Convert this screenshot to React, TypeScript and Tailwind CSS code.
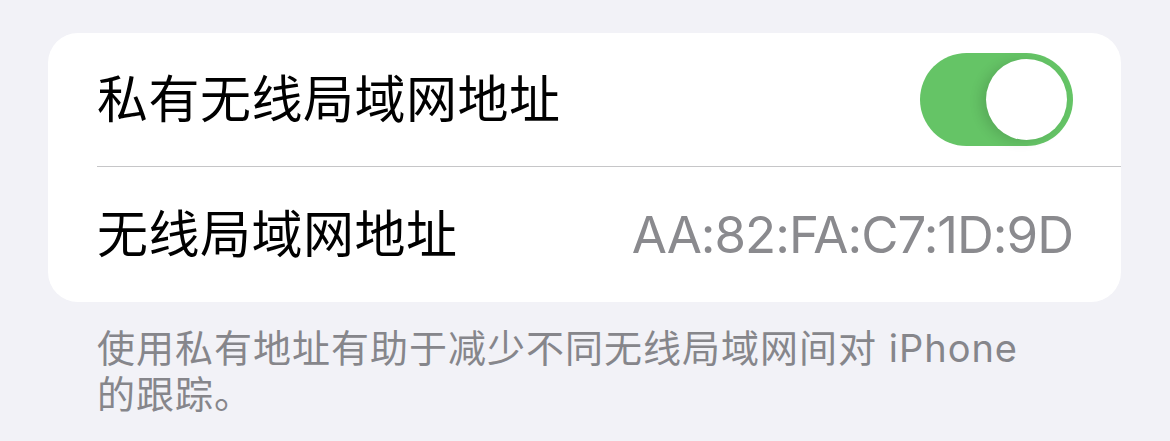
import type React from "react"

const font = { fontFamily: '"Inter", "Noto Sans CJK SC", sans-serif' }

interface RowProps {
  label: string
  last?: boolean
  children: React.ReactNode
}

const Row = ({ label, last, children }: RowProps) => (
  <div className="pl-[49px]">
    <div
      className={`flex items-center justify-between pr-[48px] ${
        last ? "h-[135px]" : "h-[134px] border-b border-[#c6c6c8]"
      }`}
    >
      <span className="text-[51px] leading-none text-black tracking-[0.5px]">{label}</span>
      {children}
    </div>
  </div>
)

function Toggle({ on }: { on: boolean }) {
  return (
    <div
      className={`flex h-[93px] w-[153px] items-center rounded-full p-[6px] ${
        on ? "justify-end bg-[#65c466]" : "justify-start bg-[#e9e9ea]"
      }`}
    >
      <div className="h-[81px] w-[81px] rounded-full bg-white shadow-[-6px_2px_12px_rgba(0,0,0,0.12)]" />
    </div>
  )
}

export default function App() {
  return (
    <div className="h-[441px] w-[1170px] bg-[#f2f2f7] pl-[48px] pr-[49px] pt-[33px]" style={font}>
      <div className="overflow-hidden rounded-[30px] bg-white">
        <Row label="私有无线局域网地址">
          <Toggle on />
        </Row>
        <Row label="无线局域网地址" last>
          <span className="text-[51px] leading-none tracking-[-1px] text-[#8a8a8e]">AA:82:FA:C7:1D:9D</span>
        </Row>
      </div>
      <p className="mt-[23px] pl-[49px] pr-[81px] text-[38px] leading-[46px] tracking-[1px] text-[#86868b]">
        使用私有地址有助于减少不同无线局域网间对 iPhone 的跟踪。
      </p>
    </div>
  )
}
